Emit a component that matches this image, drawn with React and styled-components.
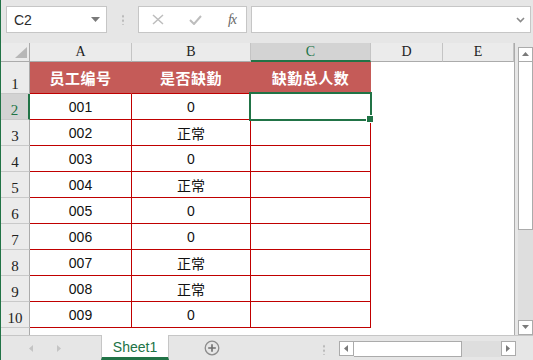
import React from 'react';
import styled, { createGlobalStyle, css } from 'styled-components';

const GREEN = '#217346';
const RED_LINE = '#c00000';
const HEAD_FILL = '#c55b58';

const GlobalStyle = createGlobalStyle`
    html, body { margin: 0; padding: 0; background: #e6e6e6; }
    * { box-sizing: border-box; }
`;

const Window = styled.div`
    width: 533px;
    height: 360px;
    display: flex;
    flex-direction: column;
    background: #e6e6e6;
    border-left: 1px solid ${GREEN};
    font-family: "Liberation Sans", "Noto Sans CJK SC", sans-serif;
    overflow: hidden;
`;

const Toolbar = styled.div`
    height: 43px;
    flex: none;
    display: flex;
    align-items: flex-start;
    padding: 6px 2px 0 5px;
`;

const Box = styled.div`
    height: 27px;
    background: #fff;
    border: 1px solid #c6c6c6;
    display: flex;
    align-items: center;
`;

const NameBox = styled(Box)`
    width: 101px;
    padding: 0 6px 0 7px;
    justify-content: space-between;
    font-size: 14px;
    color: #2b2b2b;
`;

const FxButtons = styled(Box)`
    width: 109px;
    padding: 0 10px 0 13px;
    justify-content: space-between;
`;

const FxLabel = styled.span`
    font-family: "Liberation Serif", serif;
    font-style: italic;
    font-size: 14px;
    color: #666;
    letter-spacing: -1px;
`;

const FormulaInput = styled(Box)`
    flex: 1;
    margin-left: 4px;
    justify-content: flex-end;
    padding-right: 5px;
`;

const Grip = styled.div`
    width: 2px;
    height: 11px;
    margin: ${p => p.$margin};
    background: radial-gradient(circle, #b5b5b5 0.9px, transparent 1.2px) 0 0 / 2px 4.5px repeat-y;
`;

const Main = styled.div`
    height: 292px;
    flex: none;
    display: flex;
`;

const SheetArea = styled.div`
    width: 514px;
    height: 292px;
    background: #fff;
    border-right: 1px solid #ababab;
    overflow: hidden;
`;

const Grid = styled.div`
    display: grid;
    grid-template-columns: 29px 102px 119px 120px 72px 71px;
    grid-template-rows: 19px 32px repeat(10, 26px);
`;

const HeadCell = styled.div`
    background: ${p => (p.$active ? '#d3d3d3' : '#ebebeb')};
    color: ${p => (p.$active ? GREEN : '#222')};
    font-family: "Liberation Serif", "DejaVu Serif", serif;
    font-size: 14px;
    display: flex;
    justify-content: center;
`;

const ColHead = styled(HeadCell)`
    align-items: center;
    border-right: 1px solid #c4c4c4;
    border-bottom: ${p => (p.$active ? `2px solid ${GREEN}` : '1px solid #ababab')};
    padding-top: ${p => (p.$active ? '1px' : '0')};
`;

const RowHead = styled(HeadCell)`
    align-items: flex-end;
    padding-bottom: 0;
    font-size: 15px;
    border-right: ${p => (p.$active ? `2px solid ${GREEN}` : '1px solid #ababab')};
    border-bottom: 1px solid #c9c9c9;
`;

const Corner = styled(HeadCell)`
    position: relative;
    border-right: 1px solid #ababab;
    border-bottom: 1px solid #ababab;
    &::after {
        content: '';
        position: absolute;
        right: 2px;
        bottom: 3px;
        border-left: 12px solid transparent;
        border-bottom: 11px solid #b7b7b7;
    }
`;

const Cell = styled.div`
    position: relative;
    display: flex;
    align-items: center;
    justify-content: center;
    font-size: 14px;
    color: #111;
    background: #fff;
    ${p => p.$table && css`
        border-right: 1px solid ${RED_LINE};
        border-bottom: 1px solid ${RED_LINE};
    `}
    ${p => p.$header && css`
        background: ${HEAD_FILL};
        border-right-color: ${HEAD_FILL};
        color: #fff;
        font-family: "Noto Sans CJK SC", sans-serif;
        font-weight: 700;
        font-size: 15px;
        letter-spacing: 0.5px;
        &:nth-child(7n + 4) { border-right-color: ${RED_LINE}; }
    `}
    ${p => p.$selected && css`
        z-index: 2;
        outline: 2px solid ${GREEN};
        outline-offset: -1px;
        margin: -1px 0 0 -1px;
        &::after {
            content: '';
            position: absolute;
            right: -4px;
            bottom: -4px;
            width: 6px;
            height: 6px;
            background: ${GREEN};
            border: 1px solid #fff;
        }
    `}
`;

const CjkText = styled.span`
    font-family: "Noto Sans CJK SC", sans-serif;
    font-size: 14px;
`;

const VScroll = styled.div`
    width: 15px;
    margin-left: 3px;
    padding-top: 4px;
    display: flex;
    flex-direction: column;
`;

const ScrollButton = styled.div`
    flex: none;
    width: 15px;
    height: 15px;
    background: #fff;
    border: 1px solid #ababab;
    display: flex;
    align-items: center;
    justify-content: center;
`;

const VTrack = styled.div`
    flex: 1;
    background: #dedede;
    display: flex;
    flex-direction: column;
`;

const VThumb = styled.div`
    height: 168px;
    background: #fff;
    border: 1px solid #ababab;
    border-top: none;
`;

const BottomBar = styled.div`
    flex: 1;
    display: flex;
    align-items: stretch;
    border-top: 1px solid #c6c6c6;
`;

const TabNav = styled.div`
    width: 100px;
    display: flex;
    align-items: center;
    gap: 21px;
    padding-left: 27px;
`;

const SheetTab = styled.div`
    width: 68px;
    margin-top: -1px;
    background: #fff;
    border-left: 1px solid #c6c6c6;
    border-right: 1px solid #c6c6c6;
    border-bottom: 3px solid ${GREEN};
    color: ${GREEN};
    font-size: 14px;
    display: flex;
    align-items: center;
    justify-content: center;
    padding-top: 1px;
`;

const AddSheet = styled.div`
    width: 16px;
    height: 16px;
    margin: 4px 0 0 35px;
    display: flex;
`;

const HScroll = styled.div`
    display: flex;
    height: 16px;
    margin: 5px 0 0 14px;
`;

const HThumb = styled.div`
    width: 108px;
    background: #fff;
    border: 1px solid #ababab;
    border-left: none;
`;

const HTrack = styled.div`
    width: 39px;
    background: #dedede;
`;

const Arrow = ({ dir, color = '#7a7a7a', size = 7 }) => {
    const pts = {
        up: '0,5 7,5 3.5,1',
        down: '0,1 7,1 3.5,5',
        left: '5,0 5,7 1,3.5',
        right: '1,0 1,7 5,3.5'
    }[dir];
    return (
        <svg width={size} height={size} viewBox="0 0 7 7">
            <polygon points={pts} fill={color} />
        </svg>
    );
};

const columns = ['A', 'B', 'C', 'D', 'E'];

const rows = [
    ['001', '0'],
    ['002', '正常'],
    ['003', '0'],
    ['004', '正常'],
    ['005', '0'],
    ['006', '0'],
    ['007', '正常'],
    ['008', '正常'],
    ['009', '0']
];

const isCjk = text => /[\u4e00-\u9fff]/.test(text);

const Value = ({ text }) => (isCjk(text) ? <CjkText>{text}</CjkText> : text);

export default function App() {
    return (
        <>
            <GlobalStyle />
            <Window>
                <Toolbar>
                    <NameBox>
                        <span>C2</span>
                        <svg width="9" height="5" viewBox="0 0 9 5"><polygon points="0,0 9,0 4.5,5" fill="#7a7a7a" /></svg>
                    </NameBox>
                    <Grip $margin="8px 14px 0 15px" />
                    <FxButtons>
                        <svg width="12" height="11" viewBox="0 0 12 11">
                            <path d="M1 1 L11 10 M11 1 L1 10" stroke="#bdbdbd" strokeWidth="1.5" fill="none" />
                        </svg>
                        <svg width="13" height="10" viewBox="0 0 13 10">
                            <path d="M1 5 L5 9 L12 1" stroke="#bdbdbd" strokeWidth="2" fill="none" />
                        </svg>
                        <FxLabel>fx</FxLabel>
                    </FxButtons>
                    <FormulaInput>
                        <svg width="9" height="6" viewBox="0 0 9 6">
                            <path d="M1 1 L4.5 4.5 L8 1" stroke="#8a8a8a" strokeWidth="1.6" fill="none" />
                        </svg>
                    </FormulaInput>
                </Toolbar>
                <Main>
                    <SheetArea>
                        <Grid>
                            <Corner />
                            {columns.map(c => (
                                <ColHead key={c} $active={c === 'C'}>{c}</ColHead>
                            ))}

                            <RowHead>1</RowHead>
                            <Cell $table $header>员工编号</Cell>
                            <Cell $table $header>是否缺勤</Cell>
                            <Cell $table $header>缺勤总人数</Cell>
                            <Cell />
                            <Cell />

                            {rows.map(([id, status], i) => (
                                <React.Fragment key={id}>
                                    <RowHead $active={i === 0}>{i + 2}</RowHead>
                                    <Cell $table>{id}</Cell>
                                    <Cell $table><Value text={status} /></Cell>
                                    <Cell $table $selected={i === 0} />
                                    <Cell />
                                    <Cell />
                                </React.Fragment>
                            ))}

                            <RowHead>11</RowHead>
                            <Cell />
                            <Cell />
                            <Cell />
                            <Cell />
                            <Cell />
                        </Grid>
                    </SheetArea>
                    <VScroll>
                        <ScrollButton><Arrow dir="up" /></ScrollButton>
                        <VTrack>
                            <VThumb />
                        </VTrack>
                        <ScrollButton><Arrow dir="down" /></ScrollButton>
                    </VScroll>
                </Main>
                <BottomBar>
                    <TabNav>
                        <Arrow dir="left" color="#c4c4c4" />
                        <Arrow dir="right" color="#c4c4c4" />
                    </TabNav>
                    <SheetTab>Sheet1</SheetTab>
                    <AddSheet>
                        <svg width="16" height="16" viewBox="0 0 16 16">
                            <circle cx="8" cy="8" r="6.8" stroke="#8c8c8c" strokeWidth="1.3" fill="none" />
                            <path d="M8 4.2 V11.8 M4.2 8 H11.8" stroke="#6f6f6f" strokeWidth="1.6" />
                        </svg>
                    </AddSheet>
                    <Grip $margin="8px 0 0 103px" />
                    <HScroll>
                        <ScrollButton><Arrow dir="left" /></ScrollButton>
                        <HThumb />
                        <HTrack />
                        <ScrollButton><Arrow dir="right" /></ScrollButton>
                    </HScroll>
                </BottomBar>
            </Window>
        </>
    );
}
